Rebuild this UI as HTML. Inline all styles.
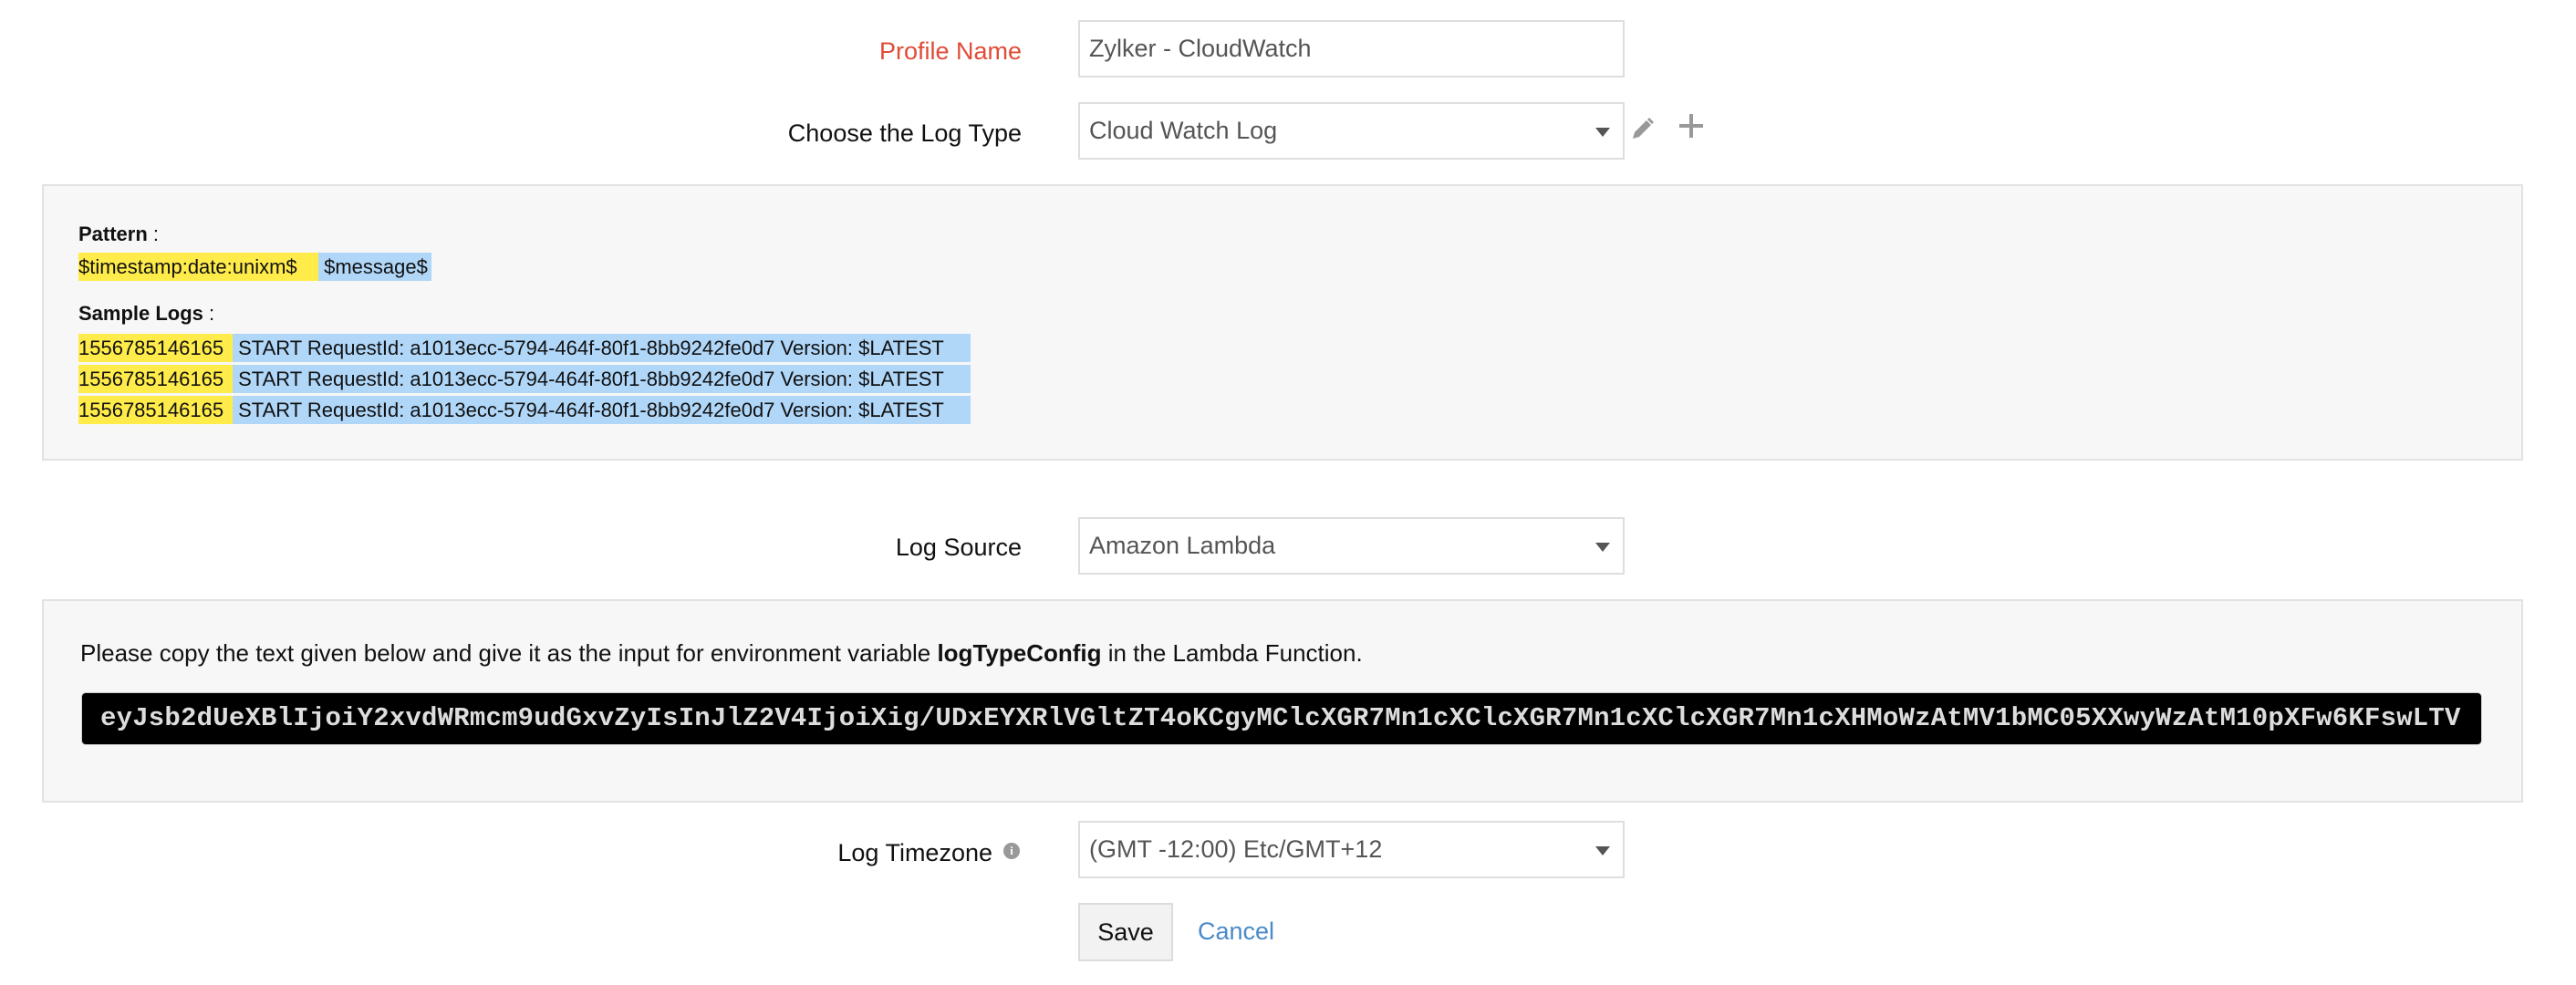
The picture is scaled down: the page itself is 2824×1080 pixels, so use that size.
<!DOCTYPE html>
<html><head><meta charset="utf-8"><style>
*{margin:0;padding:0;box-sizing:border-box}
body{width:2824px;height:1080px;background:#fff;position:relative;overflow:hidden;font-family:"Liberation Sans",Arial,sans-serif;color:#111}
.a{position:absolute;white-space:nowrap}
.lbl{position:absolute;right:1704px;font-size:27px;line-height:32px;white-space:nowrap}
.inp{position:absolute;left:1182px;width:599px;height:63px;border:2px solid #dedede;background:#fff;font-size:27px;color:#555;padding-left:10px;line-height:59px;white-space:nowrap}
.arr{position:absolute;right:14px;top:26px;width:0;height:0;border-left:8px solid transparent;border-right:8px solid transparent;border-top:10px solid #555}
.box{position:absolute;left:46px;width:2720px;background:#f7f7f7;border:2px solid #e2e2e2}
.y{background:#ffec4a}.b{background:#b0d6f8}
.ln{position:absolute;left:86px;font-size:22px;line-height:31px;height:31px;white-space:nowrap}
.ln span{display:inline-block;height:31px;overflow:visible;white-space:nowrap;vertical-align:top}
</style></head><body>
<div class="lbl" style="top:40px;color:#e04b38">Profile Name</div>
<div class="inp" style="top:22px">Zylker - CloudWatch</div>
<div class="lbl" style="top:130px">Choose the Log Type</div>
<div class="inp" style="top:112px">Cloud Watch Log<div class="arr"></div></div>
<svg class="a" style="left:1786px;top:126px" width="30" height="30" viewBox="0 0 30 30"><path d="M4 26 L6 19 L19 6 L24 11 L11 24 Z" fill="#999"/><path d="M20 5 L22 3 L27 8 L25 10 Z" fill="#999"/></svg>
<svg class="a" style="left:1840px;top:124px" width="28" height="28" viewBox="0 0 28 28"><path d="M14 1V27M1 14H27" stroke="#999" stroke-width="4"/></svg>

<div class="box" style="top:202px;height:303px"></div>
<div class="a" style="left:86px;top:244px;font-size:22px"><b>Pattern</b> :</div>
<div class="ln" style="top:277px"><span class="y" style="width:263px">$timestamp:date:unixm$</span><span class="b" style="width:124px">&nbsp;$message$</span></div>
<div class="a" style="left:86px;top:331px;font-size:22px"><b>Sample Logs</b> :</div>
<div class="ln" style="top:366px"><span class="y" style="width:169px">1556785146165</span><span class="b" style="width:809px">&nbsp;START RequestId: a1013ecc-5794-464f-80f1-8bb9242fe0d7 Version: $LATEST</span></div>
<div class="ln" style="top:400px"><span class="y" style="width:169px">1556785146165</span><span class="b" style="width:809px">&nbsp;START RequestId: a1013ecc-5794-464f-80f1-8bb9242fe0d7 Version: $LATEST</span></div>
<div class="ln" style="top:434px"><span class="y" style="width:169px">1556785146165</span><span class="b" style="width:809px">&nbsp;START RequestId: a1013ecc-5794-464f-80f1-8bb9242fe0d7 Version: $LATEST</span></div>

<div class="lbl" style="top:584px">Log Source</div>
<div class="inp" style="top:567px">Amazon Lambda<div class="arr"></div></div>

<div class="box" style="top:657px;height:223px"></div>
<div class="a" style="left:88px;top:700px;font-size:26px;line-height:32px">Please copy the text given below and give it as the input for environment variable <b>logTypeConfig</b> in the Lambda Function.</div>
<div class="a" style="left:89px;top:759px;width:2632px;height:58px;background:#000;border-radius:5px;border:1px solid #ccc;overflow:hidden;font-family:'Liberation Mono','Courier New',monospace;font-weight:bold;font-size:29px;letter-spacing:0.2px;line-height:56px;color:#ddd;padding-left:20px">eyJsb2dUeXBlIjoiY2xvdWRmcm9udGxvZyIsInJlZ2V4IjoiXig/UDxEYXRlVGltZT4oKCgyMClcXGR7Mn1cXClcXGR7Mn1cXClcXGR7Mn1cXHMoWzAtMV1bMC05XXwyWzAtM10pXFw6KFswLTV</div>

<div class="lbl" style="top:919px;right:1736px">Log Timezone</div>
<div class="a" style="left:1100px;top:924px;width:18px;height:18px;border-radius:50%;background:#999;color:#fff;font-size:13px;font-weight:bold;text-align:center;line-height:18px;font-family:'Liberation Serif',serif">i</div>
<div class="inp" style="top:900px">(GMT -12:00) Etc/GMT+12<div class="arr"></div></div>

<div class="a" style="left:1182px;top:990px;width:104px;height:64px;background:#f2f2f2;border:2px solid #dcdcdc;font-size:27px;line-height:60px;text-align:center">Save</div>
<div class="a" style="left:1313px;top:1005px;font-size:27px;line-height:32px;color:#4a8ac9">Cancel</div>
</body></html>
